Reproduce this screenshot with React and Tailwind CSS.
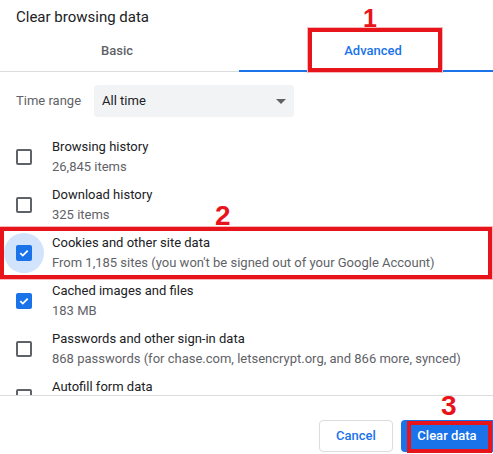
import React from "react";

const rows = [
  { title: "Browsing history", sub: "26,845 items", checked: false },
  { title: "Download history", sub: "325 items", checked: false },
  {
    title: "Cookies and other site data",
    sub: "From 1,185 sites (you won't be signed out of your Google Account)",
    checked: true,
    focused: true,
  },
  { title: "Cached images and files", sub: "183 MB", checked: true },
  {
    title: "Passwords and other sign-in data",
    sub: "868 passwords (for chase.com, letsencrypt.org, and 866 more, synced)",
    checked: false,
  },
  { title: "Autofill form data", checked: false },
];

const Checkbox = ({ checked, focused }) => (
  <div className="relative w-4 h-4 shrink-0">
    {focused && (
      <div className="absolute -left-[12px] -top-[12px] w-10 h-10 rounded-full bg-[#d2e3fc]" />
    )}
    {checked ? (
      <div className="relative w-4 h-4 rounded-[2px] bg-[#1a73e8] flex items-center justify-center">
        <svg width="12" height="12" viewBox="0 0 12 12">
          <path d="M2.3 6.2 L4.8 8.6 L9.7 3.6" fill="none" stroke="white" strokeWidth="1.8" />
        </svg>
      </div>
    ) : (
      <div className="w-4 h-4 rounded-[2px] border-2 border-[#5f6368]" />
    )}
  </div>
);

const Row = ({ title, sub, checked, focused }) => (
  <div className="flex items-center h-12 pl-4 gap-5">
    <Checkbox checked={checked} focused={focused} />
    <div className="flex flex-col h-10 text-[13px] leading-5 whitespace-nowrap">
      <span className="text-[#202124]">{title}</span>
      {sub && <span className="text-[#5f6368]">{sub}</span>}
    </div>
  </div>
);

const Mark = ({ className, children }) => (
  <div
    className={`absolute font-bold text-[#e8141c] leading-none ${className}`}
    style={{ fontFamily: '"Liberation Sans", Arial, sans-serif' }}
  >
    {children}
  </div>
);

export default function App() {
  return (
    <div
      className="relative w-[493px] h-[454px] bg-white overflow-hidden flex flex-col"
      style={{ fontFamily: "Roboto, 'Liberation Sans', sans-serif" }}
    >
      <div className="h-[27px] pl-4 pt-[7px] text-[15px] leading-5 text-[#202124]">
        Clear browsing data
      </div>

      <div className="flex h-[45px]">
        <div className="w-[239px] border-b border-[#dadce0] pt-[14px] pr-[5px] text-center text-[13px] leading-5 font-medium text-[#5f6368]">
          Basic
        </div>
        <div className="flex-1 border-b-2 border-[#1a73e8] pt-[14px] pl-[14px] text-center text-[13px] leading-5 font-medium text-[#1a73e8]">
          Advanced
        </div>
      </div>

      <div className="flex items-center pl-4 pt-[13px] gap-[13px] text-[13px] leading-5">
        <span className="text-[#5f6368]">Time range</span>
        <div className="w-[200px] h-8 rounded-[4px] bg-[#f1f3f4] flex items-center justify-between pl-2 pr-[8px]">
          <span className="text-[#202124]">All time</span>
          <svg width="10" height="5" viewBox="0 0 10 5">
            <path d="M0 0 L10 0 L5 5 Z" fill="#5f6368" />
          </svg>
        </div>
      </div>

      <div className="mt-4 h-[262px] overflow-hidden">
        {rows.map((r) => (
          <Row key={r.title} {...r} />
        ))}
      </div>

      <div className="flex-1 border-t border-[#dadce0] flex justify-end items-start pt-6 gap-2">
        <button className="h-8 w-[74px] rounded-[4px] border border-[#dadce0] bg-white text-[13px] font-medium text-[#1a73e8]">
          Cancel
        </button>
        <button className="h-8 w-[92px] rounded-l-[4px] bg-[#1a73e8] text-[13px] font-medium text-white">
          Clear data
        </button>
      </div>

      {/* annotations */}
      <div className="absolute left-[308px] top-[28px] w-[134px] h-[44px] border-4 border-[#e8141c] shadow-[0_0_0_1px_#f6b8b8]" />
      <div className="absolute left-0 top-[227px] w-[492px] h-[52px] border-4 border-[#e8141c] shadow-[0_0_0_1px_#f6b8b8]" />
      <div className="absolute left-[407px] top-[421px] w-[85px] h-[32px] border-4 border-[#e8141c]" />
      <Mark className="left-[363px] top-[6px] text-[25px]">1</Mark>
      <Mark className="left-[215px] top-[202px] text-[28px]">2</Mark>
      <Mark className="left-[441px] top-[392px] text-[28px]">3</Mark>
    </div>
  );
}
